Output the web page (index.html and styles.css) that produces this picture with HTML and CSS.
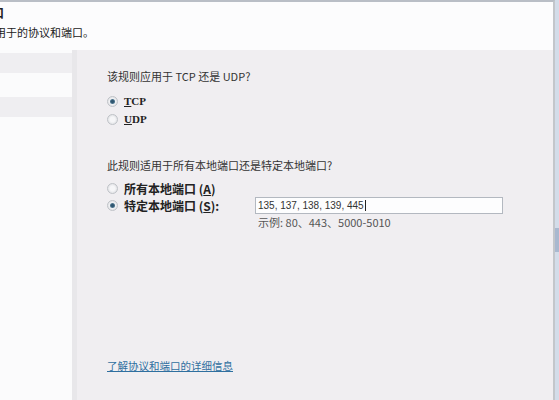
FILE: index.html
```html
<!DOCTYPE html>
<html lang="zh-CN">
<head>
    <meta charset="UTF-8">
    <title>新建入站规则向导 - 协议和端口</title>
    <link rel="stylesheet" href="styles.css">
</head>
<body>

<div class="window">
    <header class="wizard-header">
        <div class="header-text">
            <h1>协议和端口</h1>
            <p>指定此规则应用于的协议和端口。</p>
        </div>
    </header>

    <div class="wizard-body">
        <!-- step list on the left -->
        <ul class="steps">
            <li class="step shaded"></li>
            <li class="step"></li>
            <li class="step shaded"></li>
        </ul>

        <div class="page">
            <p class="question">该规则应用于 TCP 还是 UDP?</p>
            <div class="options">
                <label class="option"><span class="radio checked"></span><b class="latin"><u>T</u>CP</b></label>
                <label class="option"><span class="radio"></span><b class="latin"><u>U</u>DP</b></label>
            </div>

            <p class="question second">此规则适用于所有本地端口还是特定本地端口?</p>
            <div class="options">
                <label class="option port"><span class="radio"></span><b>所有本地端口 (<u>A</u>)</b></label>
                <div class="option port">
                    <span class="radio checked"></span><b class="port-label">特定本地端口 (<u>S</u>):</b>
                    <div class="port-input">135, 137, 138, 139, 445<span class="caret"></span></div>
                </div>
                <div class="example">示例: 80、443、5000-5010</div>
            </div>

            <a class="more-link" href="#">了解协议和端口的详细信息</a>
        </div>
    </div>
</div>
<div class="frame"><span class="frame-mark"></span></div>

</body>
</html>
```

FILE: styles.css
```css
body {
    margin: 0;
    width: 559px;
    height: 400px;
    overflow: hidden;
    display: flex;
    font-family: "Noto Sans CJK SC", "Liberation Sans", sans-serif;
    color: #333;
    background-color: #f0eef1;
}
.window {
    width: 553px;
    height: 398px;
    border-top: 2px solid #b9bec6;
    border-right: 2px solid #c3c6cb;
    display: flex;
    flex-direction: column;
    overflow: hidden;
}
.frame {
    flex: 1;
    background-color: #d3dce9;
    display: flex;
    flex-direction: column;
}
.frame-mark {
    margin-top: 228px;
    height: 24px;
    background-color: #a9b8cf;
}
.wizard-header {
    height: 48px;
    background-color: #fcfcfd;
    overflow: hidden;
}
.header-text {
    margin-left: -71px;
}
.wizard-header h1 {
    margin: 4px 0 0 15px;
    font-size: 12px;
    line-height: 14px;
    font-weight: bold;
    color: #222;
}
.wizard-header p {
    margin: 5px 0 0;
    font-size: 11px;
    line-height: 14px;
    color: #222;
}
.wizard-body {
    flex: 1;
    display: flex;
}
.steps {
    list-style: none;
    margin: 0;
    padding: 3px 0 0;
    width: 72px;
    background-color: #fbfbfc;
    border-right: 5px solid #e8e7ea;
}
.step {
    height: 24px;
}
.step.shaded {
    height: 20px;
    background-color: #efeef1;
}
.page {
    flex: 1;
    display: flex;
    flex-direction: column;
    padding: 19px 0 27px 30px;
    font-size: 11px;
}
.question {
    margin: 0;
    line-height: 14px;
    color: #333;
}
.question.second {
    margin-top: 30px;
}
.options {
    margin-top: 9px;
}
.question.second + .options {
    margin-top: 8px;
}
.option {
    display: flex;
    align-items: center;
    height: 18px;
    gap: 6px;
    font-size: 12px;
    color: #222;
}
.option.port {
    height: 17px;
}
.latin {
    font-family: "Liberation Serif", serif;
    font-size: 11px;
}
.radio {
    width: 9px;
    height: 9px;
    border: 1px solid #bfc2c7;
    border-radius: 50%;
    background: radial-gradient(circle, #f6f6f8 35%, #d6d8dc 100%);
    display: flex;
    align-items: center;
    justify-content: center;
}
.radio.checked::after {
    content: "";
    width: 5px;
    height: 5px;
    border-radius: 50%;
    background: radial-gradient(circle, #2f5670 30%, #6f96ad 100%);
}
.port-label {
    width: 125px;
}
.port-input {
    width: 244px;
    height: 15px;
    padding-left: 2px;
    border: 1px solid #b3b8c0;
    background-color: #fdfdfe;
    font-family: "Liberation Sans", sans-serif;
    font-size: 10px;
    font-weight: normal;
    line-height: 15px;
    color: #333;
    display: flex;
    align-items: center;
}
.caret {
    width: 1px;
    height: 11px;
    margin-left: 1px;
    background-color: #222;
}
.example {
    margin: 1px 0 0 151px;
    line-height: 14px;
    font-size: 11px;
    color: #555;
}
.more-link {
    margin-top: auto;
    align-self: flex-start;
    line-height: 14px;
    font-size: 10.5px;
    color: #2f6f9f;
    text-decoration: underline;
}
```
